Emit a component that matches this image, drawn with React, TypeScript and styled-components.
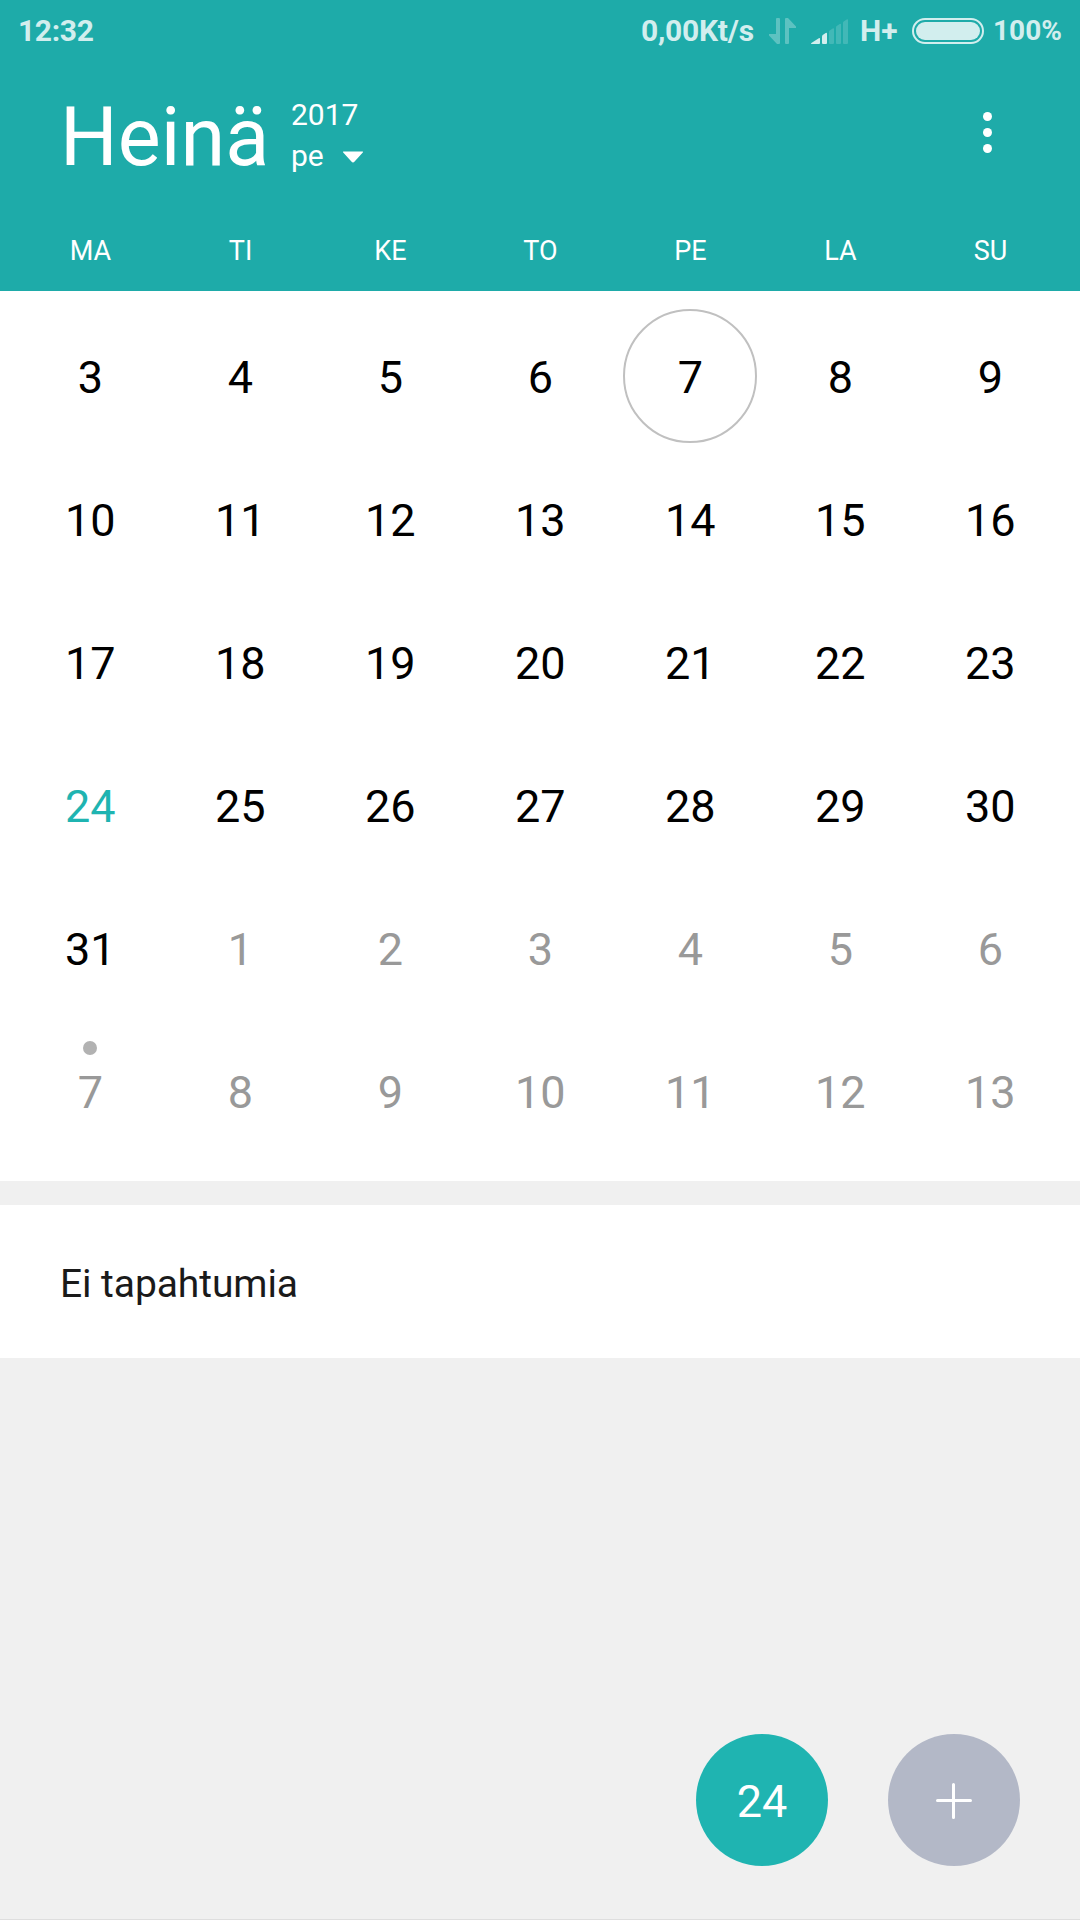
import React from "react";
import styled, { createGlobalStyle } from "styled-components";

const GlobalStyle = createGlobalStyle`
  *, *::before, *::after { box-sizing: border-box; }
  body { margin: 0; background: #f0f0f0; }
  button { border: 0; padding: 0; margin: 0; background: none; font: inherit; color: inherit; }
  svg { display: block; }
`;

const Screen = styled.div`
  width: 1080px;
  height: 1920px;
  display: flex;
  flex-direction: column;
  background: #f0f0f0;
  border-bottom: 1px solid #dedede;
  font-family: Roboto, "Noto Sans", sans-serif;
  overflow: hidden;
`;

const Header = styled.header`
  height: 291px;
  display: flex;
  flex-direction: column;
  background: #1eaba9;
  color: #fff;
`;

const StatusBar = styled.div`
  height: 62px;
  padding: 0 18px;
  display: flex;
  justify-content: space-between;
  align-items: center;
  color: #d2eeee;
  font-weight: 700;
`;

const StatusGroup = styled.div`
  display: flex;
  align-items: center;
`;

const StatusText = styled.span<{ $size: number; $width?: number; $tracking?: number }>`
  width: ${(p) => (p.$width ? `${p.$width}px` : "auto")};
  font-size: ${(p) => p.$size}px;
  letter-spacing: ${(p) => p.$tracking ?? 0}px;
  line-height: 36px;
  white-space: nowrap;
`;

const TitleBar = styled.div`
  height: 150px;
  padding: 0 88px 0 60px;
  display: flex;
  justify-content: space-between;
  align-items: flex-start;
`;

const TitleGroup = styled.div`
  display: flex;
`;

const Month = styled.h1`
  width: 231px;
  margin: 0;
  padding-top: 26px;
  font-size: 81px;
  font-weight: 400;
  line-height: 100px;
`;

const YearColumn = styled.div`
  padding-top: 33px;
  display: flex;
  flex-direction: column;
  gap: 1px;
  font-size: 30px;
  line-height: 40px;
`;

const WeekdayPicker = styled.button`
  display: flex;
  align-items: center;
  gap: 18px;
  line-height: 40px;

  svg {
    margin-top: 2px;
  }
`;

const MenuButton = styled.button`
  padding-top: 50px;
`;

const Weekdays = styled.div`
  padding: 18px 15px 0 15.5px;
  display: grid;
  grid-template-columns: repeat(7, 150px);
  font-size: 27px;
  line-height: 42px;
  text-align: center;
`;

const Calendar = styled.main`
  height: 890px;
  padding: 15px 15px 0;
  display: grid;
  grid-template-columns: repeat(7, 150px);
  grid-auto-rows: 143px;
  align-content: start;
  background: #fff;
`;

type Tone = "normal" | "today" | "muted";
const tones: Record<Tone, string> = {
  normal: "#000",
  today: "#1fb4b1",
  muted: "#999",
};

const Day = styled.div<{ $tone: Tone; $single: boolean }>`
  position: relative;
  padding-left: ${(p) => (p.$single ? 1 : 0.4)}px;
  font-size: 45px;
  line-height: 143px;
  text-align: center;
  color: ${(p) => tones[p.$tone]};
`;

const SelectionRing = styled.span`
  position: absolute;
  left: 8px;
  top: 3px;
  width: 134px;
  height: 134px;
  border: 2px solid #c0c0c0;
  border-radius: 50%;
`;

const EventDot = styled.span`
  position: absolute;
  left: 68px;
  top: 20px;
  width: 14px;
  height: 14px;
  border-radius: 50%;
  background: #b2b2b2;
`;

const Agenda = styled.section`
  height: 153px;
  margin-top: 24px;
  padding: 4px 60px 0;
  display: flex;
  align-items: center;
  background: #fff;
  color: #1a1a1a;
  font-size: 39px;
  line-height: 50px;
  letter-spacing: -0.08px;
`;

const Actions = styled.footer`
  flex: 1;
  padding: 0 60px 53px;
  display: flex;
  justify-content: flex-end;
  align-items: flex-end;
  gap: 60px;
`;

const RoundButton = styled.button<{ $color: string; $drop?: number }>`
  width: 132px;
  height: 132px;
  padding-top: ${(p) => p.$drop ?? 2}px;
  display: flex;
  align-items: center;
  justify-content: center;
  border-radius: 50%;
  background: ${(p) => p.$color};
  color: #fff;
  font-size: 45px;
  line-height: 60px;
`;

const StatusIcons = () => (
  <svg width="104" height="28" viewBox="0 0 104 28" fill="#d2eeee">
    <g opacity="0.35">
      <path d="M7 2Q7 1 8 1h2q1 0 1 1v24q0 1-1 1H8L0 18.500v-1.500h7z" />
      <path d="M16 2q0-1 1-1h2l8 8.500v1.500h-7v15q0 1-1 1h-2q-1 0-1-1z" />
    </g>
    <path d="M42 26.200L50.200 21Q51 20.700 51 21.500V26q0 1-1 1H43q-1.500 0-1-.8z" />
    <path d="M53 19.500q0-1 .7-1.500l3-2q1.300-.7 1.300.5V26q0 1-1 1h-3q-1 0-1-1z" />
    <g opacity="0.2">
      <path d="M60 15q0-1 .7-1.400l3-2q1.300-.8 1.300.4v14q0 1-1 1h-3q-1 0-1-1z" />
      <path d="M67 10.500q0-1 .7-1.400l3-2q1.300-.8 1.300.4V26q0 1-1 1h-3q-1 0-1-1z" />
      <path d="M74 6q0-1 .7-1.400l3-2q1.300-.8 1.300.4v23q0 1-1 1h-3q-1 0-1-1z" />
    </g>
  </svg>
);

const Battery = () => (
  <svg width="72" height="26" viewBox="0 0 72 26">
    <rect x="1" y="1" width="70" height="24" rx="12" fill="none" stroke="#d2eeee" strokeWidth="2" />
    <rect x="4" y="4" width="64" height="18" rx="9" fill="#d2eeee" />
  </svg>
);

const BatterySlot = styled.span`
  width: 81px;
`;

const IconSlot = styled.span`
  width: 91px;
  overflow: hidden;
`;

const weekdays = ["MA", "TI", "KE", "TO", "PE", "LA", "SU"];

interface DayInfo {
  label: number;
  tone: Tone;
  selected: boolean;
  event: boolean;
}

const days: DayInfo[] = Array.from({ length: 42 }, (_, i) => {
  const july = i < 29;
  const label = july ? i + 3 : i - 28;
  return {
    label,
    tone: july ? (label === 24 ? "today" : "normal") : "muted",
    selected: july && label === 7,
    event: !july && label === 7,
  };
});

export default function App() {
  return (
    <>
      <GlobalStyle />
      <Screen>
        <Header>
          <StatusBar>
            <StatusText $size={30} $tracking={-0.35}>12:32</StatusText>
            <StatusGroup>
              <StatusText $size={30} $width={128} $tracking={-0.25}>0,00Kt/s</StatusText>
              <IconSlot>
                <StatusIcons />
              </IconSlot>
              <StatusText $size={30} $width={52}>H+</StatusText>
              <BatterySlot>
                <Battery />
              </BatterySlot>
              <StatusText $size={28} $width={69}>100%</StatusText>
            </StatusGroup>
          </StatusBar>
          <TitleBar>
            <TitleGroup>
              <Month>Heinä</Month>
              <YearColumn>
                <span>2017</span>
                <WeekdayPicker>
                  pe
                  <svg width="22" height="12" viewBox="0 0 22 12" fill="#fff">
                    <path d="M1.500 0.500h19q1 0 .3 1l-8.200 9q-1.600 1.800-3.200 0l-8.200-9q-.7-1 .3-1z" />
                  </svg>
                </WeekdayPicker>
              </YearColumn>
            </TitleGroup>
            <MenuButton aria-label="Menu">
              <svg width="9" height="41" viewBox="0 0 9 41" fill="#fff">
                <circle cx="4.500" cy="4.500" r="4.500" />
                <circle cx="4.500" cy="20.500" r="4.500" />
                <circle cx="4.500" cy="36.500" r="4.500" />
              </svg>
            </MenuButton>
          </TitleBar>
          <Weekdays>
            {weekdays.map((name) => (
              <span key={name}>{name}</span>
            ))}
          </Weekdays>
        </Header>
        <Calendar>
          {days.map((day, i) => (
            <Day key={i} $tone={day.tone} $single={day.label < 10}>
              {day.selected && <SelectionRing />}
              {day.event && <EventDot />}
              {day.label}
            </Day>
          ))}
        </Calendar>
        <Agenda>Ei tapahtumia</Agenda>
        <Actions>
          <RoundButton $color="#1fb4b1" $drop={4}>24</RoundButton>
          <RoundButton $color="#b3b8c7" aria-label="Add">
            <svg width="36" height="36" viewBox="0 0 36 36" stroke="#fff" strokeWidth="3" strokeLinecap="round">
              <path d="M1.500 17.500H34.500M17.500 1.500V34.500" />
            </svg>
          </RoundButton>
        </Actions>
      </Screen>
    </>
  );
}
